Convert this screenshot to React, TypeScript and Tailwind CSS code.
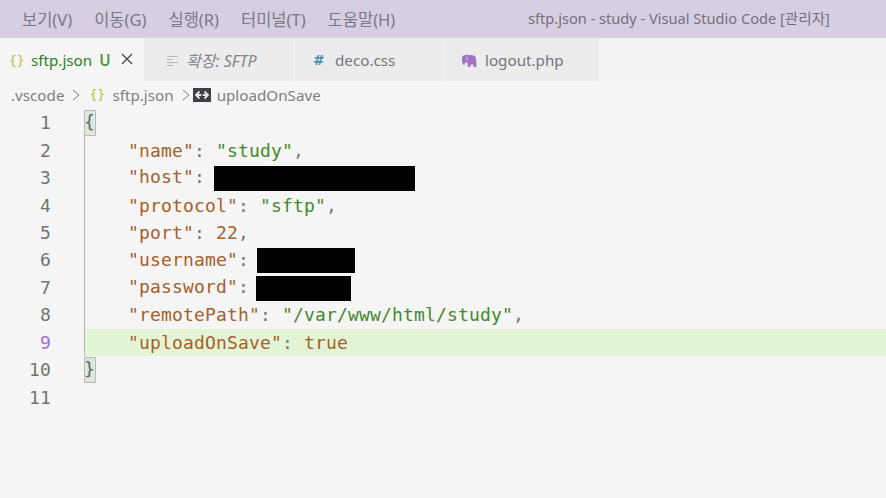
import React from "react";

const ui = "font-['Noto_Sans','Noto_Sans_CJK_KR',sans-serif]";

const Elephant = () => (
  <svg width="16" height="14" viewBox="0 0 16 14" fill="#a074c4">
    <path d="M1 4C1 2 2.500 1 4 1.200 5 .2 6.800 .4 7.400 1.200 9.500 .7 12 .8 13.500 2 15 3.200 15.300 5.500 15.300 8.500L15.300 13 12.600 13 12.400 10.500 9.600 10.500 9.400 13 6.800 13 6.600 9.600 5.200 8.200C4 8.300 3.700 10 3.200 11.500 2 11 1 8.500 1 6.500Z" />
    <path d="M5.500 2.500C6.500 3.500 6.500 6 5.500 7" stroke="#ececec" strokeWidth="0.700" fill="none" />
  </svg>
);

const LinesIcon = () => (
  <svg width="14" height="12" viewBox="0 0 14 12" stroke="#b9b9b9" strokeWidth="1">
    <path d="M1 1.500H12M1 4.500H7M1 7.500H12M1 10.500H7" />
  </svg>
);

const KeyIcon = () => (
  <svg className="-ml-[2px]" width="18" height="14" viewBox="0 0 18 14" fill="none">
    <rect width="18" height="14" fill="#3f3f46" />
    <path d="M3 7H15M6.500 3.500L3 7L6.500 10.500M11.500 3.500L15 7L11.500 10.500" stroke="#e8e8e8" strokeWidth="1.800" />
    <path d="M9 1.500V12.500" stroke="#3f3f46" strokeWidth="1.500" />
  </svg>
);

const K = ({ children }: { children: React.ReactNode }) => <span className="text-[#a5602a]">{children}</span>;
const S = ({ children }: { children: React.ReactNode }) => <span className="text-[#42892a]">{children}</span>;
const P = ({ children }: { children: React.ReactNode }) => <span className="text-[#70757a]">{children}</span>;

const Black = ({ w }: { w: string }) => <span className={`inline-block h-[25px] bg-black align-middle ${w}`}></span>;

const lines: React.ReactNode[] = [
  null,
  <><K>"name"</K><P>: </P><S>"study"</S><P>,</P></>,
  <><K>"host"</K><P>: </P><span className="-ml-[2px]"><Black w="w-[201px]" /></span></>,
  <><K>"protocol"</K><P>: </P><S>"sftp"</S><P>,</P></>,
  <><K>"port"</K><P>: </P><K>22</K><P>,</P></>,
  <><K>"username"</K><P>: </P><span className="-ml-[3px]"><Black w="w-[98px]" /></span></>,
  <><K>"password"</K><P>: </P><span className="-ml-[4px]"><Black w="w-[95px]" /></span></>,
  <><K>"remotePath"</K><P>: </P><S>"/var/www/html/study"</S><P>,</P></>,
  <><K>"uploadOnSave"</K><P>: </P><K>true</K></>,
  null,
  null,
];

const Bracket = ({ c }: { c: string }) => (
  <span className="inline-block h-[26px] w-[12px] border border-[#b9b9b9] bg-[#dfe6dc] text-center leading-[22px] text-[#4f6a72]">
    <span className="-ml-[1px]">{c}</span>
  </span>
);

const Chevron = () => (
  <svg className="ml-[8px] mr-[5px]" width="8" height="12" viewBox="0 0 8 12" fill="none" stroke="#7d7d85" strokeWidth="1"><path d="M1 1L7 6L1 11" /></svg>
);

export default function App() {
  return (
    <div className={`h-[498px] w-[886px] overflow-hidden bg-[#f5f5f5] ${ui}`}>
      {/* title bar */}
      <div className="flex h-[38px] items-center bg-[#d6cfe1] text-[16.500px] text-[#7c7788]">
        <div className="flex w-[528px] shrink-0 items-center gap-[22px] pl-[22px] pt-[2px]">
          <div>보기(V)</div>
          <div>이동(G)</div>
          <div>실행(R)</div>
          <div>터미널(T)</div>
          <div>도움말(H)</div>
        </div>
        <div className="whitespace-nowrap text-[14.600px] text-[#757080]">sftp.json - study - Visual Studio Code [관리자]</div>
      </div>

      {/* tabs */}
      <div className="flex h-[43px] bg-[#f3f3f3] text-[15.200px]">
        <div className="flex w-[144px] items-center bg-[#f5f5f5] pl-[9px] pt-[2px]">
          <span className="w-[22px] font-['DejaVu_Sans_Mono',monospace] text-[13px] text-[#c4b83f]">{"{}"}</span>
          <span className="text-[#2e7d1e]">sftp.json</span>
          <span className="ml-[7px] font-semibold text-[#4f9a3d]">U</span>
          <svg className="ml-[10px] -mt-[3px]" width="12" height="12" viewBox="0 0 12 12" stroke="#424242" strokeWidth="1.200">
            <path d="M1 1L11 11M11 1L1 11" />
          </svg>
        </div>
        <div className="flex w-[150px] items-center bg-[#ececec] pl-[22px] pt-[2px] italic text-[#85818e]">
          <LinesIcon />
          <span className="ml-[6px] text-[16px]">확장: SFTP</span>
        </div>
        <div className="ml-px flex w-[149px] items-center bg-[#ececec] pl-[18px] pt-[2px] text-[#77737f]">
          <span className="w-[22px] font-['DejaVu_Sans',sans-serif] text-[14px] font-bold text-[#4b8cab]">#</span>
          <span>deco.css</span>
        </div>
        <div className="ml-px flex w-[154px] items-center bg-[#ececec] pl-[16px] pt-[2px] text-[#77737f]">
          <Elephant />
          <span className="ml-[8px]">logout.php</span>
        </div>
      </div>

      {/* breadcrumb */}
      <div className="flex h-[28px] items-center pl-[11px] text-[15.200px] text-[#7d7d85]">
        <span>.vscode</span>
        <Chevron />
        <span className="ml-[4px] w-[23px] font-['DejaVu_Sans_Mono',monospace] text-[13px] text-[#c4b83f]">{"{}"}</span>
        <span>sftp.json</span>
        <Chevron />
        <KeyIcon />
        <span className="ml-[6px]">uploadOnSave</span>
      </div>

      {/* editor */}
      <div className="font-['DejaVu_Sans_Mono',monospace] text-[18px] tracking-[0.160px]">
        {lines.map((line, i) => (
          <div key={i} className="flex h-[27.450px] items-center leading-[25px]">
            <div className={`w-[51px] shrink-0 text-right ${i === 8 ? "text-[#a06fd6]" : "text-[#6f7570]"}`}>{i + 1}</div>
            <div className={`ml-[33px] flex h-full flex-1 items-center whitespace-pre ${i === 8 ? "bg-[#e4f5d6]" : ""} ${i > 0 && i < 9 ? "border-l border-[#b4b4b4] pl-[43px]" : ""}`}>
              {i === 0 ? <Bracket c="{" /> : i === 9 ? <Bracket c="}" /> : <span>{line}</span>}
            </div>
          </div>
        ))}
      </div>
    </div>
  );
}
